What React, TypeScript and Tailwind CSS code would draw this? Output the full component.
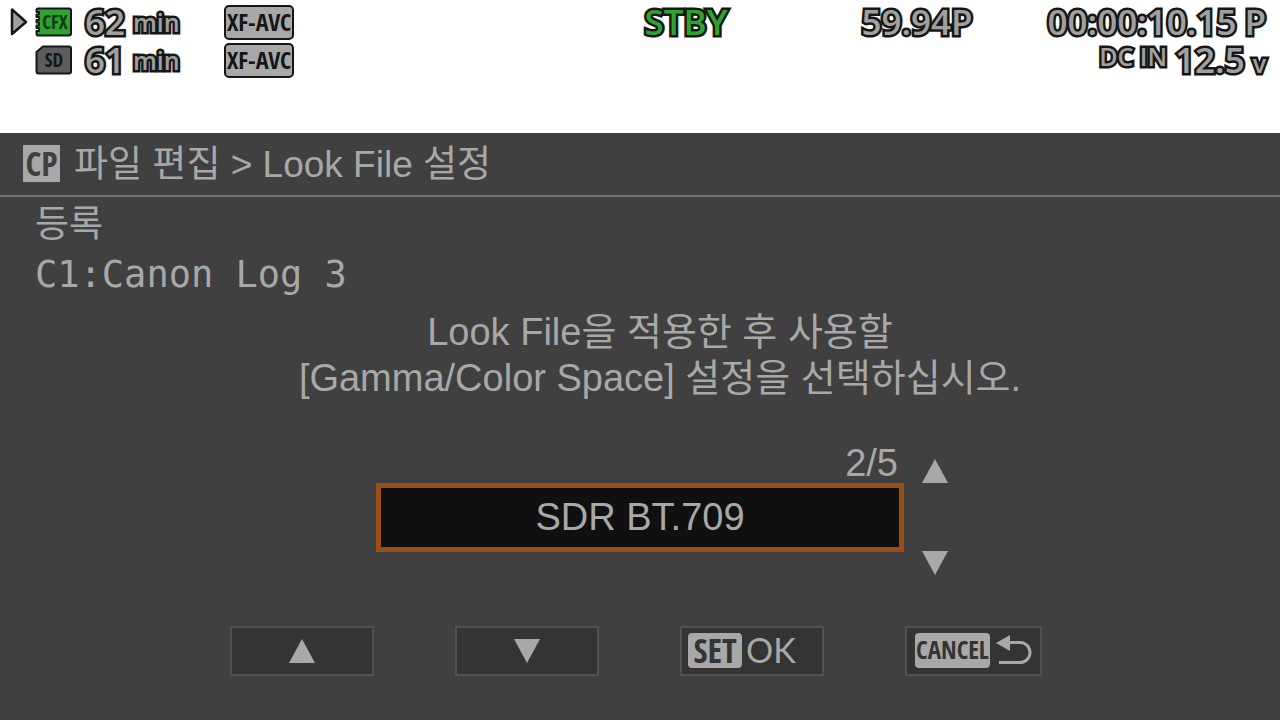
import { ReactNode } from "react";
import clsx from "clsx";

interface OsdProps {
  children: ReactNode;
  small?: boolean;
  live?: boolean;
}

// Outlined on-screen-display text
const Osd = ({ children, small, live }: OsdProps) => (
  <span
    className={clsx(
      "whitespace-nowrap font-semibold [-webkit-text-stroke:5px_#161616] [paint-order:stroke_fill] [stroke-linejoin:round]",
      live ? "text-[#2fa22f]" : "text-[#a0a0a0]",
      small ? "text-[25px] leading-[28px]" : "text-[35px] leading-[36px]"
    )}
  >
    {children}
  </span>
);

const CodecBadge = () => (
  <span className="flex h-[35px] w-[70px] items-center justify-center whitespace-nowrap rounded-[5px] border-2 border-[#161616] bg-[#a8a8a8] font-['Open_Sans_Condensed','Open_Sans',sans-serif] text-[24px] text-[#161616]">
    XF-AVC
  </span>
);

const PlayMark = () => (
  <svg width="18" height="30" viewBox="0 0 18 30">
    <path
      d="M2 2.500V27L16 15Z"
      fill="#a0a0a0"
      stroke="#161616"
      strokeWidth="2.500"
      strokeLinejoin="round"
    />
  </svg>
);

const CfxCard = () => (
  <svg width="38" height="30" viewBox="0 0 38 30">
    <path
      d="M3 1.500H34Q36 1.500 36 3.500V26.500Q36 28.500 34 28.500H3Q1.500 28.500 1.500 26V24H4V21H1.500V18.500H4V15.500H1.500V13H4V10H1.500V7.500H4V5H1.500V3.500Q1.500 1.500 3 1.500Z"
      fill="#2fa22f"
      stroke="#161616"
      strokeWidth="2"
      strokeLinejoin="round"
    />
    <text
      x="20"
      y="22"
      textAnchor="middle"
      fill="#163a16"
      className="font-['Open_Sans_Condensed','Open_Sans',sans-serif] text-[19px] font-semibold"
    >
      CFX
    </text>
  </svg>
);

const SdCard = () => (
  <svg width="38" height="30" viewBox="0 0 38 30">
    <path
      d="M8 1.500H34Q36 1.500 36 3.500V26.500Q36 28.500 34 28.500H3.500Q1.500 28.500 1.500 26.500V7Z"
      fill="#5c5c5c"
      stroke="#161616"
      strokeWidth="2"
      strokeLinejoin="round"
    />
    <text
      x="19"
      y="22"
      textAnchor="middle"
      fill="#161616"
      className="font-['Open_Sans_Condensed','Open_Sans',sans-serif] text-[19px] font-semibold"
    >
      SD
    </text>
  </svg>
);

const Triangle = ({ down = false }: { down?: boolean }) => (
  <svg width="26" height="24" viewBox="0 0 26 24">
    <path d={down ? "M0 0H26L13 24Z" : "M13 0L26 24H0Z"} fill="#a8a8a8" />
  </svg>
);

const ReturnArrow = () => (
  <svg width="36" height="30" viewBox="0 0 36 30">
    <path d="M0 8L14 0V16Z" fill="#a8a8a8" />
    <path
      d="M13 7.500H24A10 10 0 0 1 24 27.500H3"
      fill="none"
      stroke="#a8a8a8"
      strokeWidth="3"
    />
  </svg>
);

const keyClass = "flex h-[50px] items-center border-2 border-[#505050] bg-[#343434]";
const keyCapClass =
  "flex h-[35px] items-center justify-center rounded-[4px] bg-[#a8a8a8] text-[#343434] font-['Open_Sans_Condensed','Open_Sans',sans-serif] font-semibold";

const StatusBar = () => (
  <header className="grid h-[133px] grid-cols-[1fr_auto_1fr] items-start bg-white pt-1 font-['Open_Sans',sans-serif]">
    <div className="grid grid-cols-[25px_50px_48px_91px_70px] items-center gap-y-[2px] pl-[10px]">
      <PlayMark />
      <CfxCard />
      <Osd>62</Osd>
      <Osd small>min</Osd>
      <CodecBadge />
      <span />
      <SdCard />
      <Osd>61</Osd>
      <Osd small>min</Osd>
      <CodecBadge />
    </div>
    <div className="pl-[92px]">
      <Osd live>STBY</Osd>
    </div>
    <div className="flex items-start justify-between pl-[134px] pr-[14px]">
      <Osd>59.94P</Osd>
      <div className="flex flex-col items-end gap-[2px]">
        <div className="flex gap-2">
          <Osd>00:00:10.15</Osd>
          <Osd>P</Osd>
        </div>
        <div className="flex items-start gap-2">
          <Osd small>DC IN</Osd>
          <div className="flex items-baseline gap-2">
            <Osd>12.5</Osd>
            <Osd small>v</Osd>
          </div>
        </div>
      </div>
    </div>
  </header>
);

const App = () => {
  return (
    <div className="flex min-h-screen flex-col bg-[#404040] font-['Liberation_Sans','Noto_Sans_CJK_KR',sans-serif] text-[#a8a8a8]">
      <StatusBar />

      <main className="flex flex-1 flex-col">
        <div className="flex h-[64px] items-center gap-[14px] border-b-2 border-[#707070] pb-[2px] pl-[23px]">
          <span className="flex size-[37px] items-center justify-center bg-[#a8a8a8] font-['Open_Sans_Condensed','Open_Sans',sans-serif] text-[34px] font-semibold text-[#404040]">
            CP
          </span>
          <h1 className="pt-1 text-[37px] leading-[50px]">
            파일 편집 &gt; Look File 설정
          </h1>
        </div>

        <div className="pl-[35px] pt-[3px] text-[37px] leading-[50px]">
          <h2>등록</h2>
          <p className="font-['DejaVu_Sans_Mono',monospace]">C1:Canon Log 3</p>
        </div>

        <p className="pl-10 pt-[9px] text-center text-[38px] leading-[46px]">
          Look File을 적용한 후 사용할
          <br />
          [Gamma/Color Space] 설정을 선택하십시오.
        </p>

        <div className="mt-10 grid grid-cols-[1fr_528px_1fr]">
          <div className="col-start-2">
            <p className="h-[42px] pr-[6px] text-right text-[38px] leading-[44px]">2/5</p>
            <input
              aria-label="Gamma/Color Space"
              readOnly
              value="SDR BT.709"
              className="block h-[69px] w-full border-[5px] border-[#9c4f14] bg-[#101010] text-center text-[38px] outline-none"
            />
          </div>
          <div className="flex h-[134px] flex-col items-start justify-between pl-[18px] pt-[18px]">
            <button aria-label="Previous">
              <Triangle />
            </button>
            <button aria-label="Next">
              <Triangle down />
            </button>
          </div>
        </div>

        <div className="mt-[51px] flex justify-center gap-[81px] pr-2">
          <button aria-label="Up" className={clsx(keyClass, "w-[144px] justify-center")}>
            <Triangle />
          </button>
          <button aria-label="Down" className={clsx(keyClass, "w-[144px] justify-center")}>
            <Triangle down />
          </button>
          <button className={clsx(keyClass, "w-[144px] gap-1 pb-[2px] pl-[6px]")}>
            <span className={clsx(keyCapClass, "w-[54px] text-[34px]")}>SET</span>
            <span className="font-['Lato',sans-serif] text-[34px] leading-[38px]">OK</span>
          </button>
          <button aria-label="Cancel" className={clsx(keyClass, "w-[137px] gap-[6px] pb-[2px] pl-2")}>
            <span className={clsx(keyCapClass, "w-[75px] text-[25px]")}>CANCEL</span>
            <ReturnArrow />
          </button>
        </div>
      </main>
    </div>
  );
};

export default App;
